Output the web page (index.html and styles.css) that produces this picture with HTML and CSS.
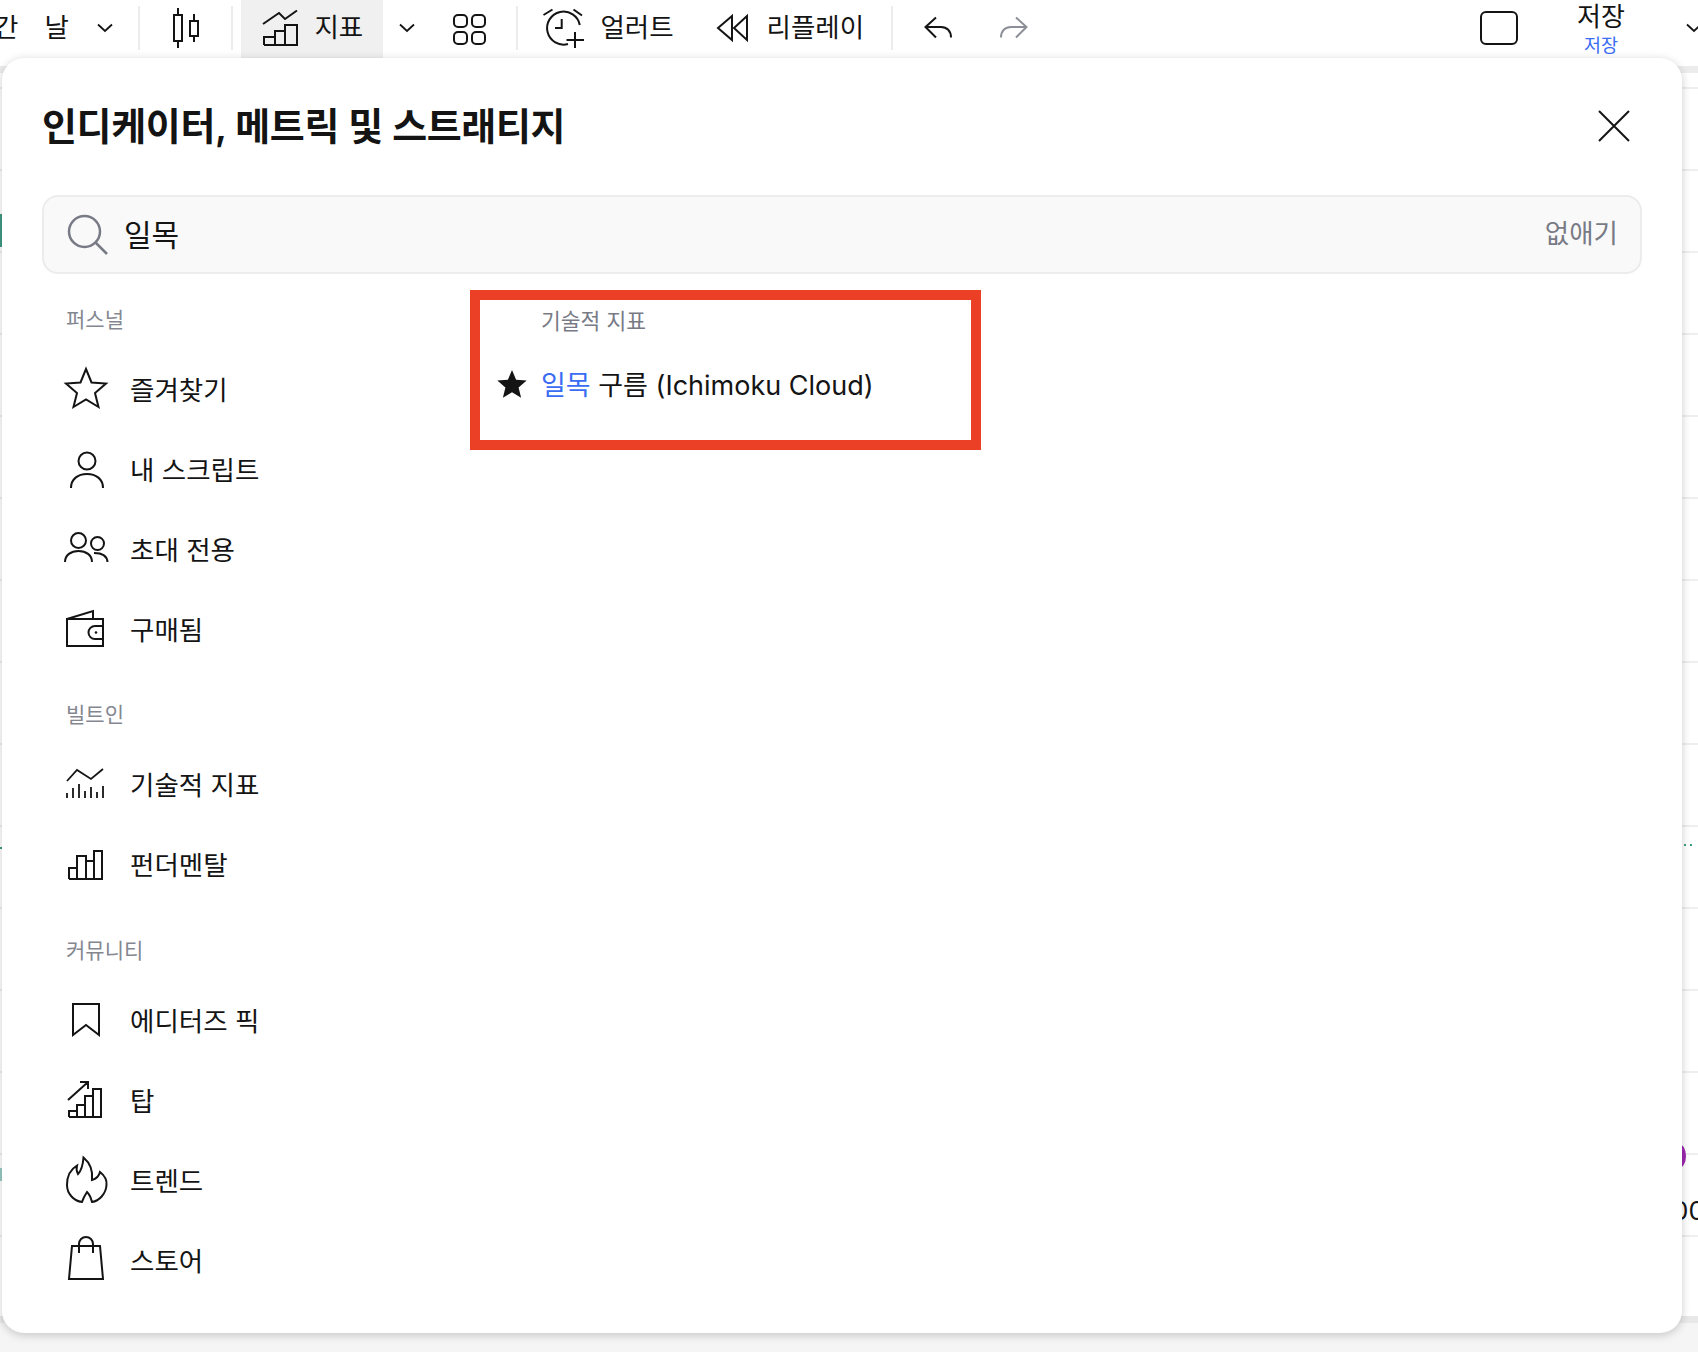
FILE: index.html
```html
<!DOCTYPE html>
<html lang="ko">
<head>
<meta charset="utf-8">
<title>인디케이터, 메트릭 및 스트래티지</title>
<link rel="stylesheet" href="styles.css">
</head>
<body>
<header class="toolbar">
  <span class="tb-text tb-cut">간</span>
  <span class="tb-text tb-day">날</span>
  <svg class="ic chev chev-day" viewBox="0 0 16 10"><path d="M1 1.500 8 8l7-6.500"/></svg>
  <i class="sep sep-a"></i>
  <svg class="ic candles" viewBox="0 0 26 40"><path d="M5 0v7M5 33v7M21 6v7M21 28v6M1 7h8v26H1zM17 13h8v15h-8z"/></svg>
  <i class="sep sep-b"></i>
  <div class="tb-active">
    <svg class="ic ind" viewBox="0 0 36 36"><path d="M1 14 17 3l6 6L35 .5M2 35v-8h11v8M13 35V21h10v14M23 35V15h12v20ZM2 35h21"/></svg>
    <span class="tb-text">지표</span>
  </div>
  <svg class="ic chev chev-ind" viewBox="0 0 16 10"><path d="M1 1.500 8 8l7-6.500"/></svg>
  <svg class="ic grid4" viewBox="0 0 33 31"><rect x="1" y="1" width="13" height="12" rx="4"/><rect x="19" y="1" width="13" height="12" rx="4"/><rect x="1" y="18" width="13" height="12" rx="4"/><rect x="19" y="18" width="13" height="12" rx="4"/></svg>
  <i class="sep sep-c"></i>
  <svg class="ic alarm" viewBox="0 0 42 40"><path d="M36.800 16A16.500 16.500 0 1 0 25 35M.5 6l9-5.500M30.500.5 39 6.500M18.700 10v9H12M32 23v16M23.500 31H41"/></svg>
  <span class="tb-text tb-alert">얼러트</span>
  <svg class="ic replay" viewBox="0 0 31 26"><path d="M15 1 1 13l14 12ZM30 1 17 13l13 12Z"/></svg>
  <span class="tb-text tb-replay">리플레이</span>
  <i class="sep sep-d"></i>
  <svg class="ic undo" viewBox="0 0 27 21"><path d="M11 .5.500 10 11 20.500M.5 10H16c6 0 10 4 10 10.500"/></svg>
  <svg class="ic undo redo" viewBox="0 0 27 21"><path d="M16 .5 26.500 10 16 20.500M26.500 10H11C5 10 1 14 1 20.500"/></svg>
  <div class="tb-right">
    <i class="layout-box"></i>
    <div class="save">
      <span class="save-top">저장</span>
      <span class="save-sub">저장</span>
    </div>
    <svg class="ic chev chev-save" viewBox="0 0 16 10"><path d="M1 1.500 8 8l7-6.500"/></svg>
  </div>
</header>

<main class="chart">
  <i class="band band-top"></i>
  <i class="mark mark-a"></i>
  <i class="mark mark-b"></i>
  <i class="mark mark-c"></i>
  <i class="mark mark-dots"></i>
  <i class="mark mark-purple"></i>
  <span class="mark mark-price">00</span>
  <i class="band band-bottom"></i>
</main>

<section class="modal">
  <div class="modal-head">
    <h1 class="modal-title">인디케이터, 메트릭 및 스트래티지</h1>
    <svg class="ic close" viewBox="0 0 32 32"><path d="M1 1l30 30M31 1 1 31"/></svg>
  </div>
  <div class="search">
    <svg class="ic search-ic" viewBox="0 0 40 40"><circle cx="16.500" cy="16.500" r="15.500"/><path d="M27.500 27.500 39 39"/></svg>
    <span class="search-text">일목</span>
    <span class="search-clear">없애기</span>
  </div>
  <div class="modal-body">
    <nav class="sidebar">
      <div class="side-label">퍼스널</div>
      <div class="row">
        <svg class="ic row-ic" viewBox="0 0 44 44"><path d="M22 3l5.500 13.500L42 17.500 31 27l3.500 14L22 33.500 9.500 41 13 27 2 17.500l14.500-1Z"/></svg>
        <span>즐겨찾기</span>
      </div>
      <div class="row">
        <svg class="ic row-ic" viewBox="0 0 44 44"><circle cx="23" cy="15" r="8.500"/><path d="M7 42c0-9 7-14 16-14s16 5 16 14"/></svg>
        <span>내 스크립트</span>
      </div>
      <div class="row">
        <svg class="ic row-ic" viewBox="0 0 44 44"><circle cx="14.500" cy="14.500" r="7.500"/><circle cx="33.500" cy="17.500" r="6.500"/><path d="M1 36c0-7 6-11 13.500-11S28 29 28 36M30 27c8 0 13 3 13.500 9"/></svg>
        <span>초대 전용</span>
      </div>
      <div class="row">
        <svg class="ic row-ic" viewBox="0 0 44 44"><path d="M3 13v27h36V13ZM3 13l26-8v8M39 20h-8a6.500 6.500 0 0 0 0 13h8"/><circle class="ic-dot" cx="32" cy="26.500" r="1.300"/></svg>
        <span>구매됨</span>
      </div>

      <div class="side-label side-gap">빌트인</div>
      <div class="row">
        <svg class="ic row-ic thin" viewBox="0 0 44 44"><path d="M3 20 13 9l14 9L39 8M3 37v-5M9 37V27M15 37V23M21 37v-7M27 37V26M33 37v-6M39 37V25"/></svg>
        <span>기술적 지표</span>
      </div>
      <div class="row">
        <svg class="ic row-ic" viewBox="0 0 44 44"><path d="M5 38V27h8v11M13 38V15h9v23M22 38V20h8v18M30 38V10h8v28ZM5 38h25"/></svg>
        <span>펀더멘탈</span>
      </div>

      <div class="side-label side-gap side-gap-last">커뮤니티</div>
      <div class="row">
        <svg class="ic row-ic" viewBox="0 0 44 44"><path d="M9 7h26v31L22 28 9 38Z"/></svg>
        <span>에디터즈 픽</span>
      </div>
      <div class="row">
        <svg class="ic row-ic" viewBox="0 0 44 44"><path d="M5 40v-6h8v6M13 40V28h8v12M21 40V19h8v21M29 40V12h8v28ZM5 40h24M4 23 24 5M16 5h8v7"/></svg>
        <span>탑</span>
      </div>
      <div class="row">
        <svg class="ic row-ic" viewBox="0 0 44 44"><path d="M19.500.5C26 6 29 14 28 23c4-1 7-4 8-8 5 4 7 9 6.500 13-.5 9-7.500 16-14.500 17-1-4-3-8-5-10-2 3-4 7-5 10C10 44 3 37 3 28c0-9 4-16 10-19.500-1 3.500 0 6.500 1 8.500 3-3 5-10 5.500-16.500Z"/></svg>
        <span>트렌드</span>
      </div>
      <div class="row">
        <svg class="ic row-ic" viewBox="0 0 44 44"><path d="M8 9h28l3 33H5ZM15 16V7a7 7 0 0 1 14 0v9"/></svg>
        <span>스토어</span>
      </div>
    </nav>
    <div class="results">
      <div class="result-box">
        <div class="result-label">기술적 지표</div>
        <div class="result-row">
          <svg class="star-fill" viewBox="0 0 30 30"><path d="M15 1l4.100 9.800 10.600.8-8.100 6.900 2.500 10.300L15 23.300 5.900 28.800l2.500-10.300L.3 11.600l10.600-.8Z"/></svg>
          <span class="result-text"><em>일목</em> 구름 (Ichimoku Cloud)</span>
        </div>
      </div>
    </div>
  </div>
</section>
</body>
</html>
```
FILE: styles.css
```css
* { box-sizing: border-box; }

html, body { margin: 0; padding: 0; }

body {
  position: relative;
  width: 1698px;
  height: 1352px;
  overflow: hidden;
  display: flex;
  flex-direction: column;
  background: #fff;
  color: #141414;
  font-family: Inter, "Noto Sans CJK KR", sans-serif;
}

.ic {
  display: block;
  flex: none;
  fill: none;
  stroke: #141414;
  stroke-width: 2;
  overflow: visible;
}

.toolbar {
  flex: none;
  height: 58px;
  display: flex;
  align-items: center;
  background: #fff;
}

.tb-text { margin-top: -4px; font-size: 26.500px; line-height: 34px; white-space: nowrap; }
.tb-cut { margin-left: -6px; margin-right: 26px; }
.tb-day { width: 24px; }

.chev { width: 16px; height: 10px; stroke-width: 1.800; }
.chev-day { margin-left: 29px; margin-top: -2px; }

.sep { display: block; flex: none; width: 2px; height: 44px; margin-top: -2px; background: #ececec; }
.sep-a { margin-left: 25px; }

.candles { width: 26px; height: 40px; margin-left: 33px; margin-top: -2px; }
.sep-b { margin-left: 32px; }

.tb-active {
  flex: none;
  align-self: flex-start;
  display: flex;
  align-items: center;
  width: 142px;
  height: 58px;
  margin-left: 8px;
  padding-left: 21px;
  background: #f0f0f0;
}

.ind { width: 36px; height: 36px; margin-right: 16px; margin-top: -2px; }

.chev-ind { margin-left: 16px; margin-top: -2px; }
.grid4 { width: 33px; height: 31px; margin-left: 38px; }
.sep-c { margin-left: 30px; }
.alarm { width: 42px; height: 40px; margin-left: 25px; }
.tb-alert { margin-left: 15px; }
.replay { width: 31px; height: 26px; margin-left: 43px; margin-top: -2px; }
.tb-replay { margin-left: 19px; }
.sep-d { margin-left: 27px; }
.undo { width: 27px; height: 21px; margin-left: 32px; margin-top: -4px; }
.redo { margin-left: 48px; stroke: #8c8f96; }

.tb-right { display: flex; align-items: center; margin-left: auto; margin-right: -4px; }
.layout-box { display: block; width: 38px; height: 34px; margin-top: -2px; border: 2.500px solid #141414; border-radius: 6px; }

.save { display: flex; flex-direction: column; align-items: center; width: 48px; margin-left: 59px; margin-top: 4px; }
.save-top { font-size: 26px; line-height: 30px; margin-top: -5px; }
.save-sub { font-size: 18.500px; line-height: 22px; color: #3a6cf4; margin-top: 2px; }
.chev-save { margin-left: 61px; margin-top: -2px; }

.chart {
  flex: 1;
  position: relative;
  background-color: #fff;
  background-image: repeating-linear-gradient(to bottom, transparent 0, transparent 80px, #efefef 80px, #efefef 82px);
  background-position: 0 -51px;
}

.mark { position: absolute; display: block; }
.mark-a { left: 0; top: 156px; width: 2px; height: 33px; background: #3f9a84; }
.mark-b { left: 0; top: 789px; width: 2px; height: 2px; background: #3f9a84; }
.mark-c { left: 0; top: 1110px; width: 2px; height: 13px; background: #97ccc4; }
.mark-dots {
  left: 1684px; top: 786px; width: 10px; height: 2px;
  background-image: linear-gradient(to right, #3f9a84 0, #3f9a84 2px, transparent 2px, transparent 6px, #3f9a84 6px, #3f9a84 8px, transparent 8px);
}
.mark-purple { left: 1672px; top: 1086px; width: 14px; height: 24px; border: 4px solid #9c27b0; border-radius: 50%; }
.mark-price { left: 1672px; top: 1140px; font-size: 26px; line-height: 26px; color: #141414; }

.band { position: absolute; left: 0; right: 0; display: block; }
.band-top { top: 8px; height: 7px; background: #ececec; }
.band-bottom {
  top: 1258px;
  bottom: 0;
  background: linear-gradient(to bottom, #e8e8e8 0, #e8e8e8 7px, #f5f5f5 7px, #f5f5f5 100%);
}

.modal {
  position: absolute;
  left: 2px;
  top: 58px;
  width: 1680px;
  height: 1275px;
  display: flex;
  flex-direction: column;
  padding: 0 40px;
  background: #fff;
  border-radius: 22px;
  box-shadow: 0 2px 10px rgba(0, 0, 0, .2);
}

.modal-head {
  flex: none;
  height: 137px;
  display: flex;
  align-items: center;
  justify-content: space-between;
  padding-right: 12px;
}

.modal-title { margin: -1px 0 0; font-size: 38px; line-height: 48px; font-weight: 600; letter-spacing: -.35px; }
.close { width: 32px; height: 32px; margin-top: -1px; }

.search {
  flex: none;
  height: 79px;
  display: flex;
  align-items: center;
  padding: 0 22px 0 24px;
  background: #f9f9f9;
  border: 2px solid #ececec;
  border-radius: 16px;
}

.search-ic { width: 40px; height: 40px; stroke: #787b86; stroke-width: 2.500; }
.search-text { margin-left: 16px; font-size: 30px; line-height: 40px; }
.search-clear { margin-left: auto; margin-top: -4px; font-size: 26.500px; line-height: 34px; color: #787b86; }

.modal-body { flex: 1; display: flex; min-height: 0; }

.sidebar { flex: none; width: 428px; padding: 31px 0 0 22px; }

.side-label { margin: 0 0 13px 2px; font-size: 21px; line-height: 30px; color: #848790; }
.side-gap { margin-top: 32px; }
.side-gap-last { margin-top: 33px; }

.row { display: flex; align-items: center; height: 80px; font-size: 26.500px; gap: 22px; white-space: nowrap; }
.row-ic { width: 44px; height: 44px; }
.thin { stroke-width: 1.800; }
.ic-dot { fill: #141414; stroke: none; }

.results { flex: 1; padding-top: 16px; }

.result-box {
  width: 511px;
  height: 160px;
  padding: 5px 0 0 61px;
  border: 10px solid #ec4026;
}

.result-label { font-size: 21.500px; line-height: 32px; color: #787b86; }

.result-row { display: flex; align-items: center; height: 40px; margin: 27px 0 0 -44px; gap: 14px; }
.star-fill { flex: none; width: 30px; height: 30px; fill: #141414; }
.result-text { position: relative; top: 2px; font-size: 27px; line-height: 40px; white-space: nowrap; }
.result-text em { font-style: normal; color: #3a6cf4; }
```
